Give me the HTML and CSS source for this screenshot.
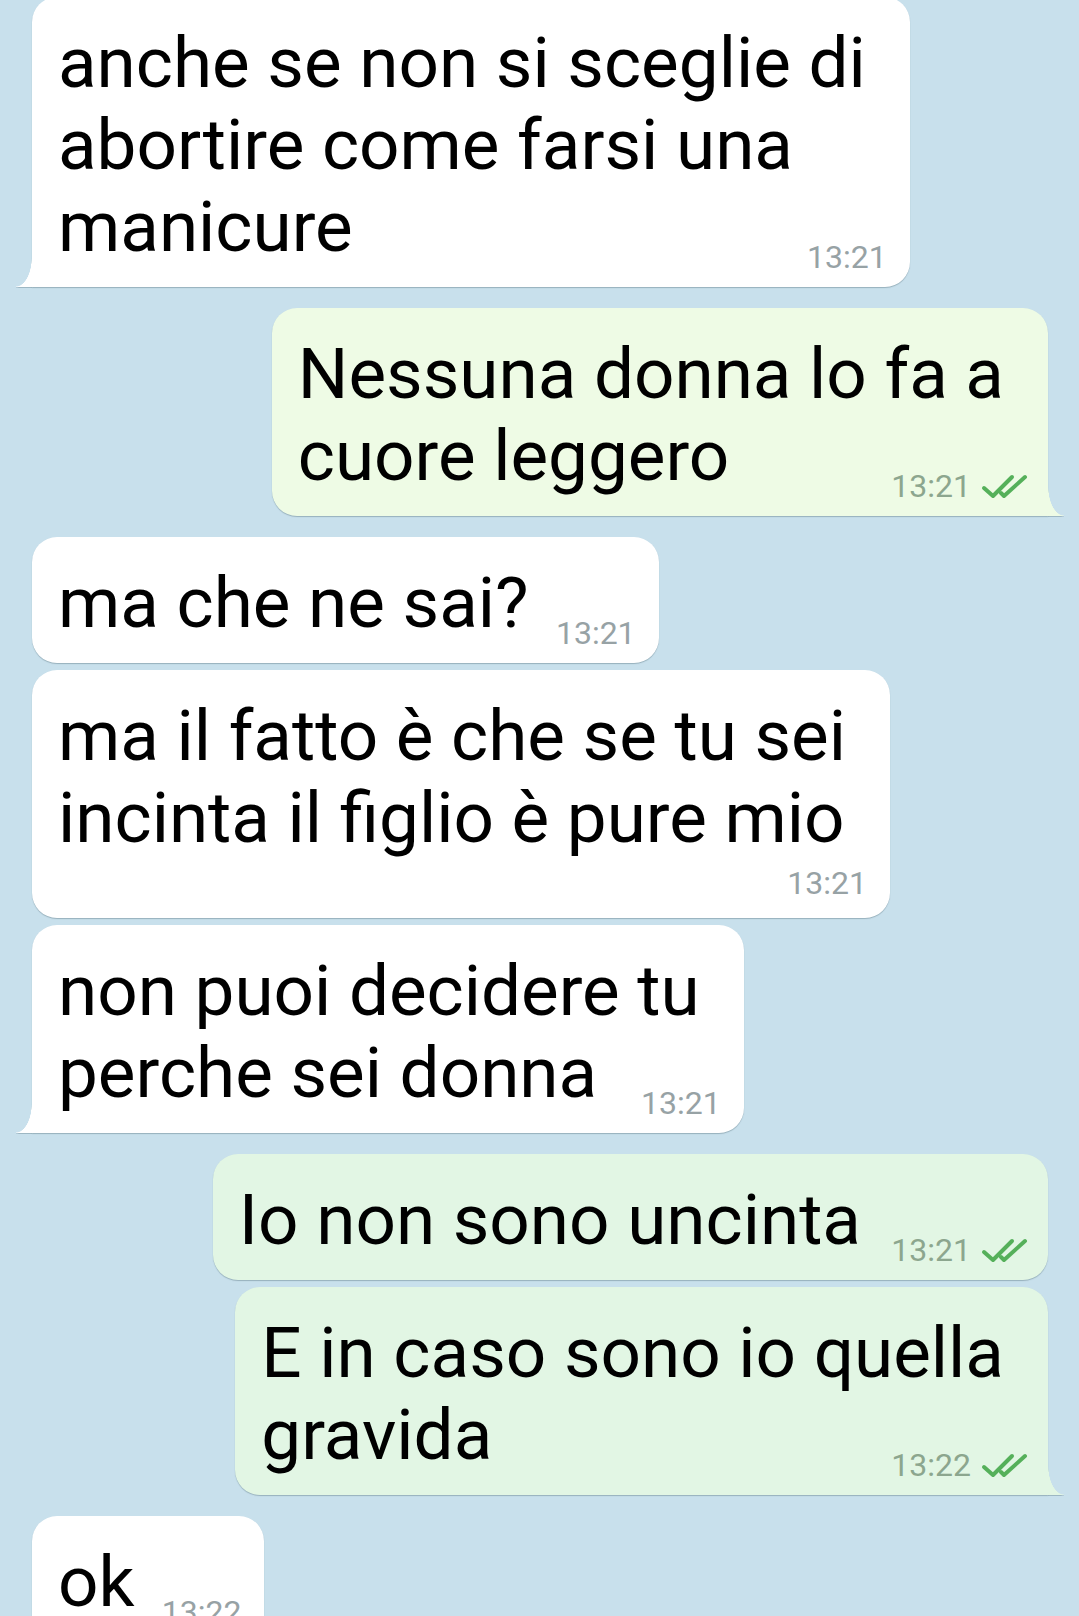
FILE: index.html
```html
<!DOCTYPE html>
<html lang="it">
<head>
<meta charset="utf-8">
<title>Chat</title>
<link rel="stylesheet" href="styles.css">
</head>
<body>
<div class="chat">
  <div class="group in first">
    <div class="bubble tail">
      <p class="text">anche se non si sceglie di<br>abortire come farsi una<br>manicure<span class="sp"></span></p>
      <span class="meta"><span class="time">13:21</span></span>
    </div>
  </div>

  <div class="group out">
    <div class="bubble tail light">
      <p class="text">Nessuna donna lo fa a<br>cuore leggero<span class="sp"></span></p>
      <span class="meta"><span class="time">13:21</span><svg class="ticks" viewBox="0 0 48 26" width="48" height="26"><path d="M3 15 L12 23 L31 4"/><path d="M20 20 L23 23 L44 4"/></svg></span>
    </div>
  </div>

  <div class="group in">
    <div class="bubble">
      <p class="text">ma che ne sai?<span class="sp"></span></p>
      <span class="meta"><span class="time">13:21</span></span>
    </div>
    <div class="bubble stacked">
      <p class="text">ma il fatto è che se tu sei<br>incinta il figlio è pure mio</p>
      <span class="meta"><span class="time">13:21</span></span>
    </div>
    <div class="bubble tail">
      <p class="text">non puoi decidere tu<br>perche sei donna<span class="sp"></span></p>
      <span class="meta"><span class="time">13:21</span></span>
    </div>
  </div>

  <div class="group out">
    <div class="bubble">
      <p class="text">Io non sono uncinta<span class="sp"></span></p>
      <span class="meta"><span class="time">13:21</span><svg class="ticks" viewBox="0 0 48 26" width="48" height="26"><path d="M3 15 L12 23 L31 4"/><path d="M20 20 L23 23 L44 4"/></svg></span>
    </div>
    <div class="bubble tail">
      <p class="text">E in caso sono io quella<br>gravida<span class="sp"></span></p>
      <span class="meta"><span class="time">13:22</span><svg class="ticks" viewBox="0 0 48 26" width="48" height="26"><path d="M3 15 L12 23 L31 4"/><path d="M20 20 L23 23 L44 4"/></svg></span>
    </div>
  </div>

  <div class="group in">
    <div class="bubble">
      <p class="text">ok<span class="sp"></span></p>
      <span class="meta"><span class="time">13:22</span></span>
    </div>
  </div>
</div>
</body>
</html>
```

FILE: styles.css
```css
html, body {
  margin: 0;
  padding: 0;
  background: #c8e0ec;
}

body {
  font-family: Roboto, "Liberation Sans", sans-serif;
  color: #000;
  overflow: hidden;
}

.chat {
  display: flex;
  flex-direction: column;
  gap: 21px;
  padding: 0 31px 0 32px;
}

.group {
  display: flex;
  flex-direction: column;
  gap: 7px;
}

.group.first {
  margin-top: -3px;
}

.group.in {
  align-items: flex-start;
}

.group.out {
  align-items: flex-end;
}

.bubble {
  position: relative;
  background: #ffffff;
  border-radius: 25px;
  padding: 25px 44px 19px 26px;
  box-shadow: 0 1px 1px rgba(60, 90, 100, 0.35);
}

.out .bubble {
  background: #e2f6e4;
}

.out .bubble.light {
  background: #eefbe5;
}

.text {
  margin: 0;
  font-size: 71px;
  line-height: 82px;
  white-space: nowrap;
}

.sp {
  display: inline-block;
  width: 86px;
  height: 1px;
}

.out .sp {
  width: 143px;
}

.meta {
  position: absolute;
  right: 23px;
  bottom: 14px;
  display: flex;
  align-items: center;
  gap: 10px;
  font-size: 32px;
  line-height: 32px;
  color: #97a2a5;
}

.out .meta {
  right: 19px;
  color: #8ca68e;
}

.ticks {
  display: block;
  fill: none;
  stroke: #55b05a;
  stroke-width: 4;
  stroke-linecap: round;
  stroke-linejoin: round;
}

.bubble.stacked .meta {
  position: static;
  justify-content: flex-end;
  margin: 8px -21px 0 0;
}

/* tails */
.in .bubble.tail {
  border-bottom-left-radius: 0;
}

.in .bubble.tail::before {
  content: "";
  position: absolute;
  left: -16px;
  bottom: 0;
  width: 16px;
  height: 30px;
  background: radial-gradient(16px 30px at 0 0, transparent 97%, #ffffff 100%);
  filter: drop-shadow(0 1px 0 rgba(60, 90, 100, 0.3));
}

.out .bubble.tail {
  border-bottom-right-radius: 0;
}

.out .bubble.tail::after {
  content: "";
  position: absolute;
  right: -16px;
  bottom: 0;
  width: 16px;
  height: 30px;
  background: radial-gradient(16px 30px at 100% 0, transparent 97%, #e2f6e4 100%);
  filter: drop-shadow(0 1px 0 rgba(60, 90, 100, 0.3));
}

.out .bubble.tail.light::after {
  background: radial-gradient(16px 30px at 100% 0, transparent 97%, #eefbe5 100%);
}
```
